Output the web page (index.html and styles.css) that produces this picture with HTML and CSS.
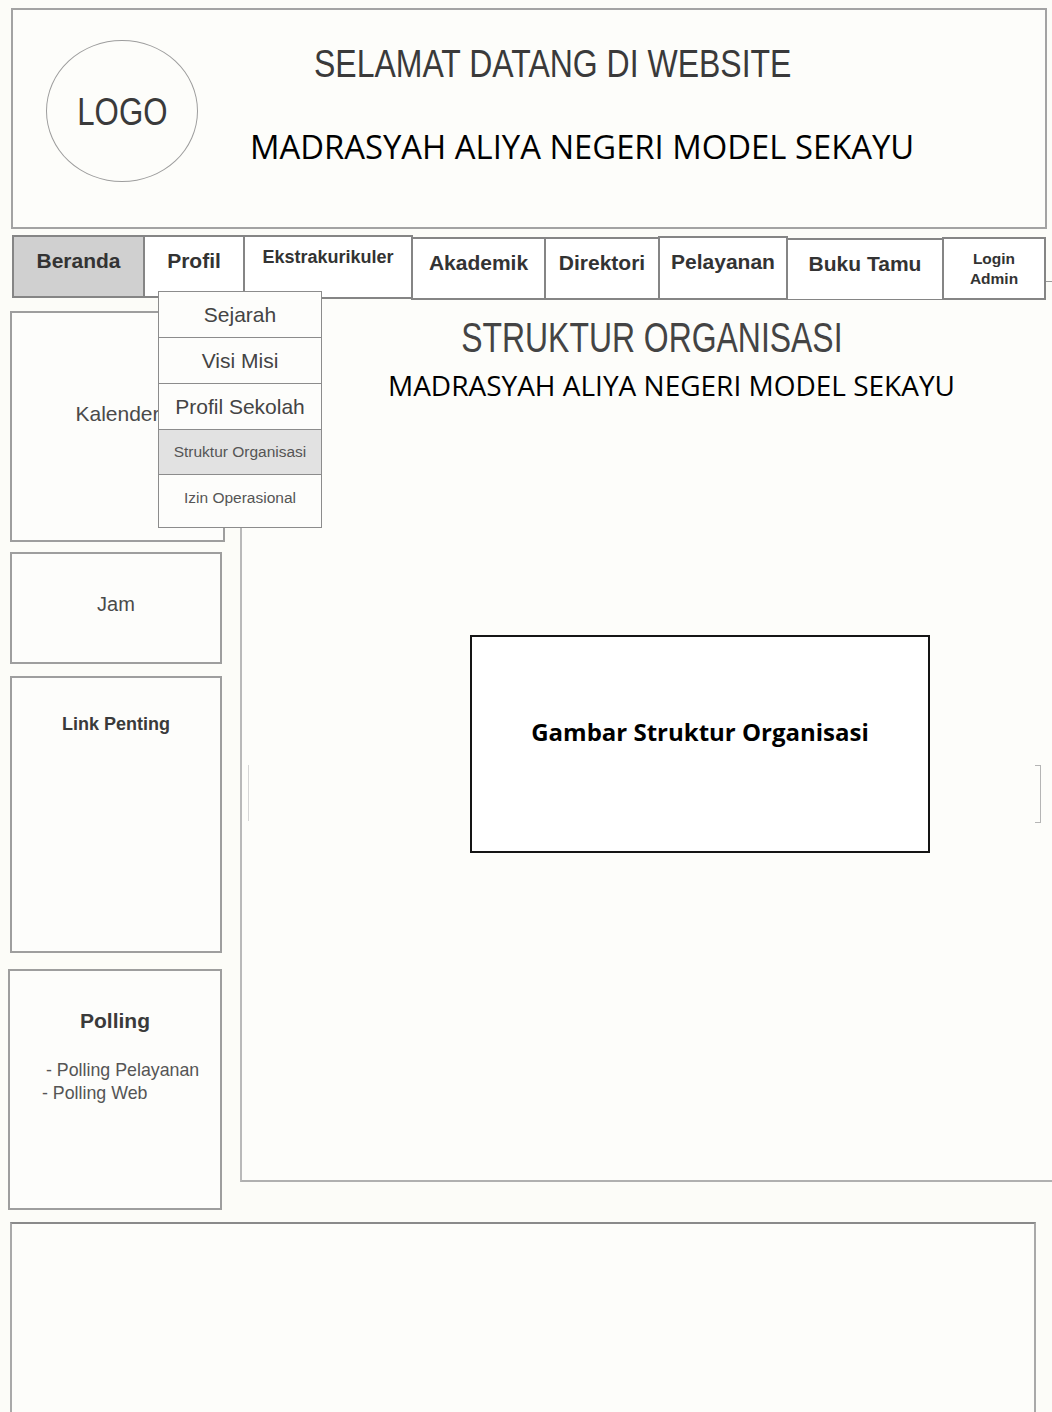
FILE: index.html
```html
<!DOCTYPE html>
<html lang="id">
<head>
    <meta charset="UTF-8">
    <meta name="viewport" content="width=device-width, initial-scale=1.0">
    <title>Struktur Organisasi - MAN Model Sekayu</title>
    <link rel="stylesheet" href="styles.css">
</head>
<body>
    <div class="header">
        <div class="logo"><span class="narrow">LOGO</span></div>
        <div class="titles">
            <div class="welcome"><span class="narrow">SELAMAT DATANG DI WEBSITE</span></div>
            <div class="school">MADRASYAH ALIYA NEGERI MODEL SEKAYU</div>
        </div>
    </div>

    <div class="nav">
        <div class="nav-item active" style="width: 133px;">Beranda</div>
        <div class="nav-item" style="width: 102px;">
            Profil
            <div class="dropdown">
                <div class="drop-item big">Sejarah</div>
                <div class="drop-item big">Visi Misi</div>
                <div class="drop-item big">Profil Sekolah</div>
                <div class="drop-item small current">Struktur Organisasi</div>
                <div class="drop-item small last">Izin Operasional</div>
            </div>
        </div>
        <div class="nav-item ekstra" style="width: 170px;">Ekstrakurikuler</div>
        <div class="nav-item low" style="width: 135px;">Akademik</div>
        <div class="nav-item low" style="width: 116px;">Direktori</div>
        <div class="nav-item mid" style="width: 130px;">Pelayanan</div>
        <div class="nav-item lower" style="width: 158px;">Buku Tamu</div>
        <div class="nav-item login" style="width: 104px;">Login<br>Admin</div>
    </div>

    <div class="content">
        <div class="sidebar">
            <div class="box kalender">Kalender</div>
            <div class="box jam">Jam</div>
            <div class="box links">Link Penting</div>
            <div class="box polling">
                <div class="poll-title">Polling</div>
                <div class="poll-item first">- Polling Pelayanan</div>
                <div class="poll-item">- Polling Web</div>
            </div>
        </div>

        <div class="main">
            <div class="page-title"><span class="narrow">STRUKTUR ORGANISASI</span></div>
            <div class="page-sub">MADRASYAH ALIYA NEGERI MODEL SEKAYU</div>
            <div class="picture">Gambar Struktur Organisasi</div>
            <div class="mark-left"></div>
            <div class="mark-right"></div>
        </div>
    </div>

    <div class="footer"></div>
</body>
</html>
```

FILE: styles.css
```css
body {
    margin: 0;
    padding: 0;
    background: #fcfcf8;
    font-family: 'Liberation Sans', Arial, sans-serif;
    color: #333;
    overflow: hidden;
}
.narrow {
    display: inline-block;
    transform: scaleX(0.8);
}

/* header */
.header {
    box-sizing: border-box;
    margin: 8px 0 0 11px;
    width: 1036px;
    height: 221px;
    border: 2px solid #a3a3a3;
    background: #fdfdfa;
    display: flex;
    align-items: flex-start;
}
.logo {
    box-sizing: border-box;
    width: 152px;
    height: 142px;
    margin: 30px 0 0 33px;
    border: 1.5px solid #9d9d9d;
    border-radius: 50%;
    display: flex;
    justify-content: center;
    align-items: center;
    font-size: 39px;
    line-height: 39px;
    color: #3a3a3a;
}
.titles {
    margin: 34px 0 0 52px;
}
.welcome {
    margin-left: 64px;
    font-size: 39px;
    line-height: 39px;
    color: #3a3a3a;
}
.welcome .narrow {
    transform: scaleX(0.82);
    transform-origin: left center;
}
.school {
    margin-top: 48px;
    font-family: 'Open Sans', sans-serif;
    font-size: 32.8px;
    line-height: 32px;
    color: #000;
    white-space: nowrap;
}

/* menu */
.nav {
    display: flex;
    align-items: flex-start;
    height: 65px;
    margin: 6px 0 0 12px;
    position: relative;
}
.nav::after {
    content: "";
    position: absolute;
    left: 1034px;
    top: 46px;
    width: 8px;
    border-top: 1px solid #999;
}
.nav-item {
    box-sizing: border-box;
    height: 63px;
    margin-left: -2px;
    padding-top: 12px;
    border: 2px solid #858585;
    background: #fff;
    text-align: center;
    font-weight: bold;
    font-size: 21px;
    line-height: 24px;
    color: #333;
    position: relative;
}
.nav-item:first-child {
    margin-left: 0;
}
.nav-item.active {
    background: #d0d0d0;
}
.nav-item.ekstra {
    height: 64px;
    padding-top: 8px;
    font-size: 18px;
}
.nav-item.low {
    margin-top: 2px;
}
.nav-item.mid {
    margin-top: 1px;
    height: 64px;
}
.nav-item.lower {
    margin-top: 3px;
}
.nav-item.login {
    margin-top: 2px;
    padding-top: 10px;
    font-size: 15.5px;
    line-height: 20px;
}

/* Profil dropdown */
.dropdown {
    position: absolute;
    left: 13px;
    top: 54px;
    z-index: 2;
    box-sizing: border-box;
    width: 164px;
    height: 237px;
    border: 1.5px solid #8c8c8c;
    background: #fdfdfb;
    font-weight: normal;
    color: #444;
}
.drop-item {
    box-sizing: border-box;
    border-bottom: 1.5px solid #8c8c8c;
    display: flex;
    align-items: center;
    justify-content: center;
}
.drop-item.big {
    height: 46px;
    font-size: 21px;
}
.drop-item.small {
    height: 45px;
    font-size: 15.5px;
    color: #555;
}
.drop-item.current {
    background: #e2e2e2;
}
.drop-item.last {
    border-bottom: none;
    height: 51px;
    padding-bottom: 6px;
}

/* body */
.content {
    display: flex;
    align-items: flex-start;
}
.sidebar {
    width: 215px;
    margin: 11px 0 0 10px;
    display: flex;
    flex-direction: column;
}
.box {
    box-sizing: border-box;
    width: 212px;
    border: 2px solid #9e9e9e;
    background: #fdfdfb;
    text-align: center;
    color: #4a4a4a;
    line-height: 24px;
}
.kalender {
    width: 215px;
    height: 231px;
    padding-top: 89px;
    font-size: 21px;
}
.jam {
    margin-top: 10px;
    height: 112px;
    padding-top: 38px;
    font-size: 20px;
}
.links {
    margin-top: 12px;
    height: 277px;
    padding-top: 34px;
    font-size: 18px;
    font-weight: bold;
    color: #3a3a3a;
}
.polling {
    margin: 16px 0 0 -2px;
    width: 214px;
    height: 241px;
    padding-top: 38px;
    text-align: left;
}
.poll-title {
    text-align: center;
    font-size: 21px;
    font-weight: bold;
    color: #3a3a3a;
}
.poll-item {
    padding-left: 32px;
    font-size: 17.8px;
    line-height: 23px;
    color: #555;
}
.poll-item.first {
    margin-top: 26px;
    padding-left: 36px;
}

.main {
    position: relative;
    box-sizing: border-box;
    flex: 1;
    height: 882px;
    margin-left: 15px;
    border-left: 2px solid #b9b9b9;
    border-bottom: 2px solid #b0b0b0;
    background: #fdfdfa;
}
.page-title {
    margin-top: 17px;
    padding-left: 10px;
    text-align: center;
    font-size: 42px;
    line-height: 42px;
    color: #444;
}
.page-title .narrow {
    transform: scaleX(0.76);
}
.page-sub {
    margin-top: 12px;
    padding-left: 49px;
    text-align: center;
    font-family: 'Open Sans', sans-serif;
    font-size: 28px;
    line-height: 28px;
    color: #000;
    white-space: nowrap;
}
.picture {
    box-sizing: border-box;
    width: 460px;
    height: 218px;
    margin: 236px 0 0 228px;
    padding-top: 83px;
    border: 2px solid #151515;
    background: #fff;
    text-align: center;
    font-family: 'Open Sans', sans-serif;
    font-weight: bold;
    font-size: 24px;
    line-height: 24px;
    color: #000;
}
.mark-left {
    position: absolute;
    left: 6px;
    top: 465px;
    height: 56px;
    border-left: 1px solid #d6d6d6;
}
.mark-right {
    position: absolute;
    left: 793px;
    top: 465px;
    width: 5px;
    height: 56px;
    border: 1.5px solid #b5b5b5;
    border-left: none;
}

.footer {
    box-sizing: border-box;
    width: 1026px;
    height: 220px;
    margin: 12px 0 0 10px;
    border: 2px solid #a9a9a9;
    border-top-color: #8a8a8a;
    border-bottom: none;
    background: #fdfdfa;
}
```
